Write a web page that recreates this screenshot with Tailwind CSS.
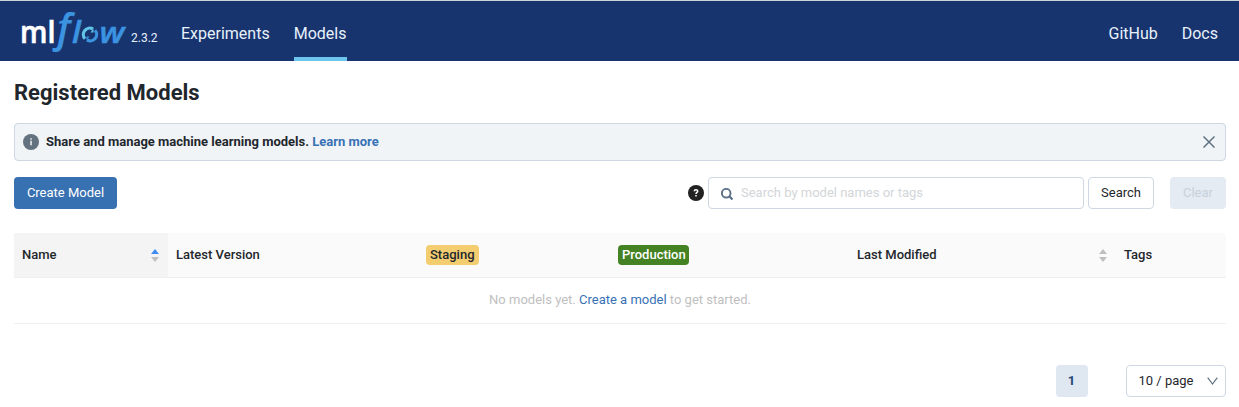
<!DOCTYPE html>
<html lang="en">
<head>
<meta charset="utf-8">
<title>MLflow</title>
<script src="https://cdn.jsdelivr.net/npm/@tailwindcss/browser@4"></script>
</head>
<body class="h-[407px] overflow-hidden bg-white font-['Roboto',sans-serif] text-[13px] leading-5 text-[#1f272d]">
<header class="flex h-[61px] border-t border-[#c9d3d8] bg-[#17346f] pr-[21px] text-base text-[#e7f1fb]">
  <svg class="w-[131px] shrink-0" height="60" viewBox="0 1 131 60" aria-label="mlflow">
    <text x="20" y="42.500" font-family="Open Sans" font-weight="600" font-size="30" fill="#fff" stroke="#fff" stroke-width=".6" textLength="35.500" lengthAdjust="spacingAndGlyphs">ml</text>
    <g fill="#3c93e0" stroke="#3c93e0" font-family="Open Sans" font-style="italic">
      <text x="57" y="42" font-weight="600" font-size="39" stroke-width=".2" textLength="13.500" lengthAdjust="spacingAndGlyphs">f</text>
      <text x="72" y="42.500" font-weight="600" font-size="30" stroke-width=".6" textLength="8.800" lengthAdjust="spacingAndGlyphs">l</text>
      <text x="99.500" y="42.500" font-weight="600" font-size="29" stroke-width=".5" textLength="25" lengthAdjust="spacingAndGlyphs">w</text>
    </g>
    <g fill="none" stroke-width="3.200">
      <path d="M85 38.800A6.400 6.400 0 0 1 93 29" stroke="#62c4e8"/>
      <path d="M95 30.200A6.400 6.400 0 0 1 87 40" stroke="#3c93e0"/>
    </g>
    <path d="M93.500 28.500v4h-3z" fill="#62c4e8"/>
    <path d="M86.500 40.500v-4h3z" fill="#3c93e0"/>
  </svg>
  <span class="w-[50px] pt-[27px] text-xs leading-5">2.3.2</span>
  <nav class="flex grow gap-6 leading-[66px]">
    <a>Experiments</a>
    <a class="h-[60px] w-[53px] border-b-4 border-[#6cc5ec]">Models</a>
    <a class="ml-auto">GitHub</a>
    <a>Docs</a>
  </nav>
</header>
<main class="px-[14px] pr-[13px]">
  <h1 class="pt-[17px] text-[22px] leading-[30px] font-bold">Registered Models</h1>
  <div class="mt-[15px] flex h-[38px] items-center rounded border border-[#cdd8e4] bg-[#f0f4f7] px-2 font-bold">
    <svg class="mr-[7px]" width="16" height="16" viewBox="0 0 16 16"><circle cx="8" cy="8" r="8" fill="#64727f"/><path d="M7.300 4.200h1.500v1.500H7.300zM7.300 6.700h1.500v4.600H7.300z" fill="#f0f4f7"/></svg>
    <span>Share and manage machine learning models. <a class="text-[#3871b4]">Learn more</a></span>
    <svg class="ml-auto mr-[2px]" width="12" height="12" viewBox="0 0 12 12" fill="none" stroke="#5f7281" stroke-width="1.500"><path d="M.5.500l11 11M11.500.500l-11 11"/></svg>
  </div>
  <div class="mt-4 flex h-8 items-center">
    <button class="h-8 w-[103px] rounded bg-[#3871b1] text-white">Create Model</button>
    <svg class="ml-auto mr-1" width="16" height="16" viewBox="0 0 16 16"><circle cx="8" cy="8" r="8" fill="#222"/><path d="M6.300 6.300C6.300 4.300 9.700 4.300 9.700 6.200 9.700 7.400 8 7.300 8 8.900M8 9.900v1.500" fill="none" stroke="#fff" stroke-width="1.500"/></svg>
    <div class="flex h-8 w-[376px] items-center rounded border border-[#cdd8e4] pl-3 text-[#d2d6d9]">
      <svg class="mt-[2px] mr-2" width="12" height="12" viewBox="0 0 12 12" fill="none" stroke="#5b7085" stroke-width="1.900"><circle cx="5.200" cy="5.200" r="4.300"/><path d="M8.300 8.300l3.200 3.200" stroke-width="2.200"/></svg>
      <span>Search by model names or tags</span>
    </div>
    <button class="ml-1 h-8 w-[66px] rounded border border-[#cdd8e4]">Search</button>
    <button class="ml-4 h-8 w-14 rounded bg-[#e4ebf2] text-[#c7d2dc]">Clear</button>
  </div>
  <section class="mt-6">
    <div class="grid h-[45px] grid-cols-[154px_250px_192px_239px_267px_110px] rounded-t-sm border-b border-[#efefef] bg-[#fafafa] font-medium">
      <div class="flex items-center justify-between bg-[#f4f4f4] px-2"><span>Name</span><svg class="mr-[1.500px]" width="8" height="13" viewBox="0 0 8 13"><path d="M0 5L4 0l4 5z" fill="#3e8cf3"/><path d="M0 8l4 5 4-5z" fill="#bfbfbf"/></svg></div>
      <div class="flex items-center px-2">Latest Version</div>
      <div class="flex items-center px-2"><span class="rounded bg-[#f3cd70] px-1">Staging</span></div>
      <div class="flex items-center px-2"><span class="w-[71px] rounded bg-[#458224] pl-1 text-white">Production</span></div>
      <div class="flex items-center justify-between px-2"><span>Last Modified</span><svg class="mr-[1.500px]" width="8" height="13" viewBox="0 0 8 13"><path d="M0 5L4 0l4 5zM0 8l4 5 4-5z" fill="#bfbfbf"/></svg></div>
      <div class="flex items-center px-2">Tags</div>
    </div>
    <div class="h-[46px] border-b border-[#efefef] text-center leading-[44px] text-[#bfbfbf]">No models yet. <a class="text-[#3871b4]">Create a model</a> to get started.</div>
  </section>
  <div class="mt-[41px] flex justify-end gap-[38px]">
    <span class="h-8 w-8 rounded bg-[#dfe7f1] pr-px text-center leading-8 font-bold text-[#244672]">1</span>
    <div class="flex h-8 w-[100px] items-center justify-between rounded border border-[#cdd8e4] pr-[7px] pl-[11.500px]">10 / page
      <svg width="11" height="8" viewBox="0 0 11 8" fill="none" stroke="#5f7281" stroke-width="1.200"><path d="M.7.700l4.800 6.300L10.300.700"/></svg>
    </div>
  </div>
</main>
</body>
</html>
